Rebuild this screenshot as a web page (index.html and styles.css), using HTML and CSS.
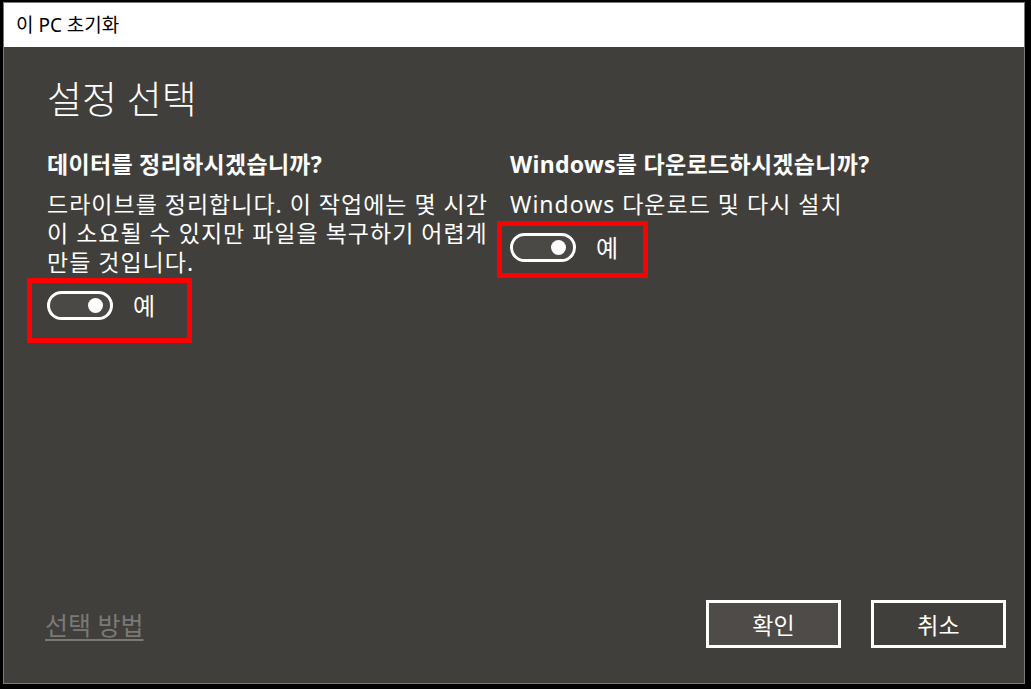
FILE: index.html
```html
<!DOCTYPE html>
<html lang="ko">
<head>
<meta charset="utf-8">
<title>이 PC 초기화</title>
<link rel="stylesheet" href="styles.css">
</head>
<body>
<div class="window">
  <div class="titlebar">이 PC 초기화</div>
  <div class="panel">
    <h1 class="heading">설정 선택</h1>
    <div class="columns">
      <section class="option">
        <h2 class="option-title">데이터를 정리하시겠습니까?</h2>
        <p class="option-desc">드라이브를 정리합니다. 이 작업에는 몇 시간<br>이 소요될 수 있지만 파일을 복구하기 어렵게<br>만들 것입니다.</p>
        <div class="toggle-row">
          <span class="toggle"><span class="knob"></span></span>
          <span class="toggle-label">예</span>
          <span class="mark mark-left"></span>
        </div>
      </section>
      <section class="option">
        <h2 class="option-title">Windows를 다운로드하시겠습니까?</h2>
        <p class="option-desc">Windows 다운로드 및 다시 설치</p>
        <div class="toggle-row">
          <span class="toggle"><span class="knob"></span></span>
          <span class="toggle-label">예</span>
          <span class="mark mark-right"></span>
        </div>
      </section>
    </div>
    <div class="footer">
      <a class="help-link">선택 방법</a>
      <div class="buttons">
        <button class="btn btn-primary">확인</button>
        <button class="btn">취소</button>
      </div>
    </div>
  </div>
</div>
</body>
</html>
```
FILE: styles.css
```css
html, body {
  margin: 0;
  padding: 0;
  background: #000;
}
body {
  font-family: "Noto Sans", "Noto Sans CJK KR", sans-serif;
  width: 1031px;
  height: 689px;
  overflow: hidden;
}
.window {
  margin: 2px 0 0 3px;
  width: 1020px;
  height: 680px;
  border: 1px solid #7a7a7a;
  display: flex;
  flex-direction: column;
}
.titlebar {
  height: 44px;
  background: #fff;
  color: #000;
  font-size: 19px;
  line-height: 44px;
  padding-left: 12px;
  flex: none;
}
.panel {
  flex: 1;
  background: #413f3b;
  color: #fff;
  padding: 28px 18px 35px 43px;
  display: flex;
  flex-direction: column;
  box-sizing: border-box;
}
.heading {
  margin: 0;
  font-size: 38px;
  font-weight: 300;
  line-height: 46px;
  letter-spacing: 0;
}
.columns {
  display: grid;
  grid-template-columns: 463px 1fr;
  margin-top: 28px;
}
.option-title {
  margin: 0;
  font-size: 23px;
  font-weight: 700;
  line-height: 30px;
  letter-spacing: 0.3px;
}
.option-desc {
  margin: 11px 0 0;
  font-size: 23px;
  line-height: 29px;
  letter-spacing: 1px;
}
.toggle-row {
  position: relative;
  display: flex;
  align-items: center;
  gap: 20px;
  margin-top: 14px;
}
.toggle {
  position: relative;
  width: 66px;
  height: 29px;
  box-sizing: border-box;
  border: 3px solid #fff;
  border-radius: 15px;
  background: #4a4946;
}
.knob {
  position: absolute;
  width: 15px;
  height: 15px;
  border-radius: 50%;
  background: #fff;
  right: 7px;
  top: 4px;
}
.toggle-label {
  font-size: 24px;
  line-height: 29px;
}
.mark {
  position: absolute;
  border: 5px solid #ff0000;
  box-sizing: border-box;
}
.mark-left {
  left: -20px;
  top: -13px;
  width: 165px;
  height: 65px;
}
.mark-right {
  left: -13px;
  top: -12px;
  width: 151px;
  height: 57px;
}
.footer {
  margin-top: auto;
  display: flex;
  align-items: center;
  justify-content: space-between;
}
.help-link {
  margin-left: -2px;
  color: #7b7975;
  font-size: 25px;
  text-decoration: underline;
  text-decoration-thickness: 2px;
  text-underline-offset: 4px;
}
.buttons {
  display: flex;
  gap: 30px;
}
.btn {
  width: 135px;
  height: 48px;
  box-sizing: border-box;
  border: 3px solid #fff;
  background: #413f3b;
  color: #fff;
  font-family: "Noto Sans", "Noto Sans CJK KR", sans-serif;
  font-size: 23px;
  padding: 0;
}
.btn-primary {
  background: #4f4b48;
}
```
